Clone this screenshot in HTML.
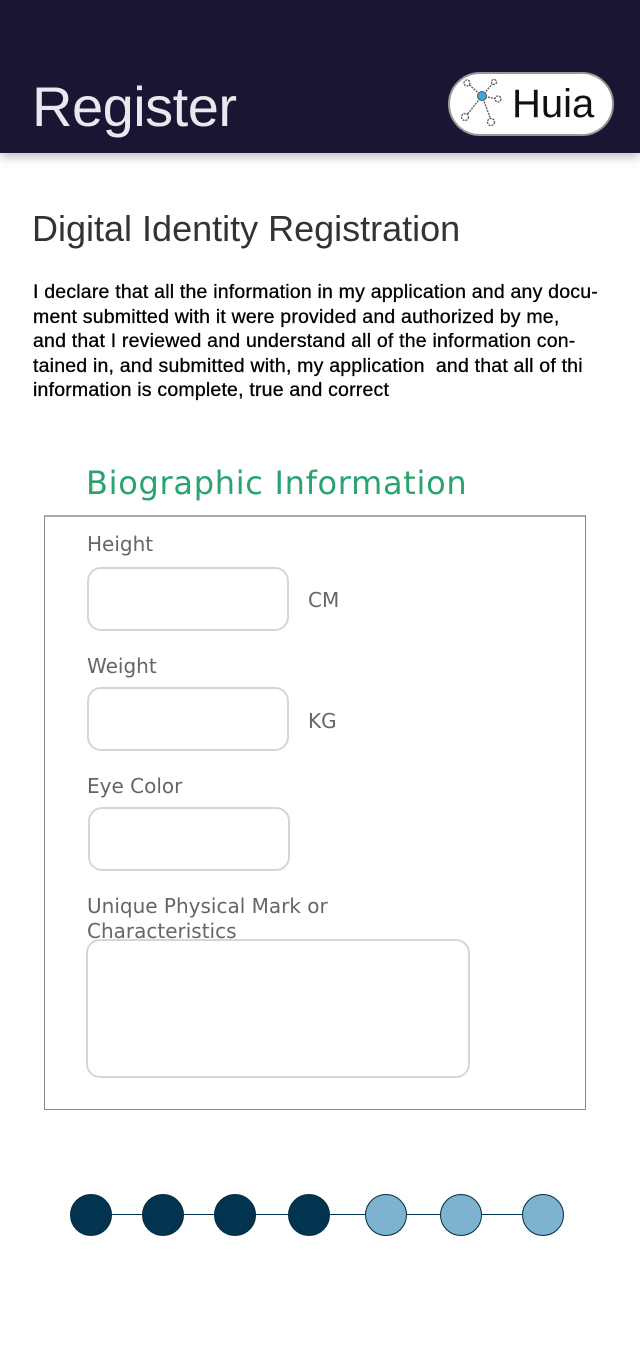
<!DOCTYPE html>
<html><head><style>
body{margin:0;width:640px;height:1362px;background:#fff;position:relative;overflow:hidden;font-family:"DejaVu Sans","Liberation Sans",sans-serif}
.hdr{position:absolute;left:0;top:0;width:640px;height:153px;background:#1b1533;box-shadow:0 4px 10px rgba(0,0,0,.25)}
.t{position:absolute;font-family:"Liberation Sans",sans-serif;font-weight:300}
.lab{position:absolute;left:87px;font-size:20px;color:#666}
.box{position:absolute;border:2px solid #d6d6d6;border-radius:14px;background:#fff}
.dot{position:absolute;top:1194px;width:40px;height:40px;border-radius:50%;background:#02344f;border:1px solid #022a40}
.l{background:#7db3cf}
</style></head><body>
<div class="hdr">
<div class="t" style="left:32px;top:74px;font-size:56px;color:#e8e8ee;font-weight:normal;letter-spacing:-0.5px">Register</div>
<div style="position:absolute;left:448px;top:72px;width:162px;height:60px;border:2px solid #999;border-radius:32px;background:#fff"></div>
<svg style="position:absolute;left:458px;top:76px" width="50" height="54">
<g stroke="#555" stroke-width="1.3" fill="#fff" stroke-dasharray="2 1">
<line x1="24" y1="20" x2="9" y2="7"/><line x1="24" y1="20" x2="35" y2="7"/><line x1="24" y1="20" x2="39" y2="23"/><line x1="24" y1="20" x2="8" y2="40"/><line x1="24" y1="20" x2="33" y2="44"/>
<circle cx="9" cy="7" r="3"/><circle cx="36" cy="6" r="2.5"/><circle cx="40" cy="23" r="3"/><circle cx="7" cy="41" r="3.5"/><circle cx="33" cy="46" r="3.5"/></g>
<circle cx="24" cy="20" r="4.5" fill="#3aa9df" stroke="#555"/></svg>
<div class="t" style="left:512px;top:82px;font-size:40px;color:#111">Huia</div>
</div>
<div class="t" style="left:32px;top:208px;font-size:36px;color:#333">Digital Identity Registration</div>
<div style="position:absolute;left:33px;top:280px;width:600px;font-family:'Liberation Sans',sans-serif;font-size:19.5px;letter-spacing:0.2px;line-height:24.5px;color:#000;-webkit-text-stroke:0.3px #000;white-space:nowrap">I declare that all the information in my application and any docu-<br>ment submitted with it were provided and authorized by me,<br>and that I reviewed and understand all of the information con-<br>tained in, and submitted with, my application &nbsp;and that all of thi<br>information is complete, true and correct</div>
<div style="position:absolute;left:86px;top:464px;font-size:32px;letter-spacing:0.7px;color:#2aa36f">Biographic Information</div>
<div style="position:absolute;left:44px;top:515px;width:540px;height:592px;border:1px solid #888;border-top:2px solid #aaa"></div>
<div class="lab" style="top:532px">Height</div>
<div class="box" style="left:87px;top:567px;width:198px;height:60px"></div>
<div class="lab" style="left:308px;top:588px">CM</div>
<div class="lab" style="top:654px">Weight</div>
<div class="box" style="left:87px;top:687px;width:198px;height:60px"></div>
<div class="lab" style="left:308px;top:709px">KG</div>
<div class="lab" style="top:774px">Eye Color</div>
<div class="box" style="left:88px;top:807px;width:198px;height:60px"></div>
<div class="lab" style="top:894px;line-height:25px">Unique Physical Mark or<br>Characteristics</div>
<div class="box" style="left:86px;top:939px;width:380px;height:135px"></div>
<div style="position:absolute;left:90px;top:1214px;width:454px;height:1px;background:#02344f"></div>
<div class="dot" style="left:70px"></div><div class="dot" style="left:142px"></div><div class="dot" style="left:214px"></div><div class="dot" style="left:288px"></div>
<div class="dot l" style="left:365px"></div><div class="dot l" style="left:440px"></div><div class="dot l" style="left:522px"></div>
</body></html>
